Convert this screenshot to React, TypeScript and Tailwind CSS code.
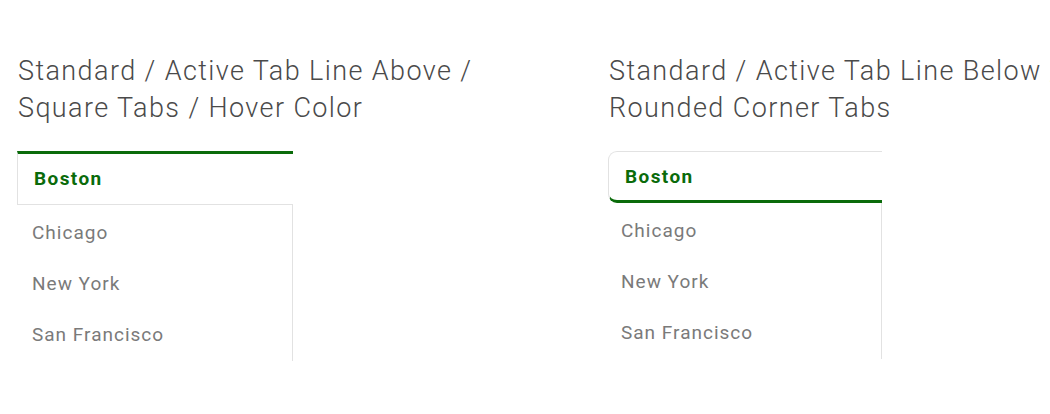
const cities = ['Boston', 'Chicago', 'New York', 'San Francisco'];

function SquareTabs() {
  return (
    <div className="w-[276px]">
      <div className="flex h-[54px] items-center border-t-[3px] border-b border-l border-t-[#0a6b0a] border-b-[#e2e2e2] border-l-[#e2e2e2] pl-4 text-[19px] font-bold tracking-[1.4px] text-[#0a6b0a]">
        {cities[0]}
      </div>
      <div className="border-r border-[#e2e2e2] pt-[3px]">
        {cities.slice(1).map((c) => (
          <div key={c} className="flex h-[51px] items-center pl-[15px] text-[19px] tracking-[1px] text-[#7a7a7a]">
            {c}
          </div>
        ))}
      </div>
    </div>
  );
}

function RoundedTabs() {
  return (
    <div className="w-[274px]">
      <div className="flex h-[52px] items-center rounded-l-[9px] border-t border-l border-b-[3px] border-t-[#e2e2e2] border-l-[#e2e2e2] border-b-[#0a6b0a] pt-[3px] pl-4 text-[19px] font-bold tracking-[1.4px] text-[#0a6b0a]">
        {cities[0]}
      </div>
      <div className="border-r border-[#e2e2e2] pt-[3px]">
        {cities.slice(1).map((c) => (
          <div key={c} className="flex h-[51px] items-center pl-[13px] text-[19px] tracking-[1px] text-[#7a7a7a]">
            {c}
          </div>
        ))}
      </div>
    </div>
  );
}

export default function App() {
  return (
    <div className="h-[414px] w-[1050px] overflow-hidden bg-white font-['Roboto',sans-serif]">
      <div className="flex gap-[71px] pl-[17px] pt-[53px]">
        {/* Line above / square */}
        <div className="w-[520px] shrink-0">
          <h3 className="mb-[24px] pl-px text-[27px] leading-[37px] font-light tracking-[1.4px] text-[#4a4a4a]">
            Standard / Active Tab Line Above / Square Tabs / Hover Color
          </h3>
          <SquareTabs />
        </div>

        {/* Line below / rounded */}
        <div className="w-[520px] shrink-0">
          <h3 className="mb-[24px] pl-px text-[27px] leading-[37px] font-light tracking-[1.4px] text-[#4a4a4a]">
            Standard / Active Tab Line Below / Rounded Corner Tabs
          </h3>
          <RoundedTabs />
        </div>
      </div>
    </div>
  );
}
